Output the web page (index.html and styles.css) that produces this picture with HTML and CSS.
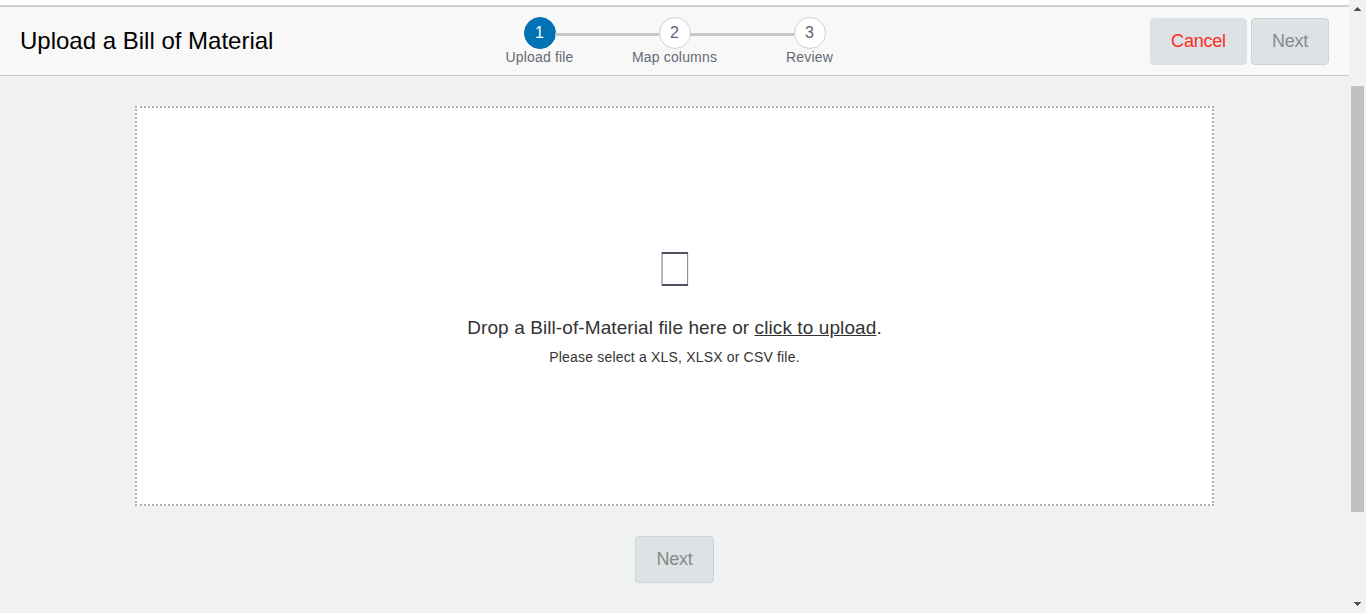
FILE: index.html
```html
<!DOCTYPE html>
<html lang="en">
<head>
<meta charset="utf-8">
<title>Upload a Bill of Material</title>
<link rel="stylesheet" href="styles.css">
</head>
<body>
<div class="viewport">
  <div class="page">
    <header class="header">
      <h1 class="title">Upload a Bill of Material</h1>
      <ol class="steps">
        <li class="step active"><span class="circle">1</span><span class="label">Upload file</span></li>
        <li class="step"><span class="circle">2</span><span class="label">Map columns</span></li>
        <li class="step"><span class="circle">3</span><span class="label">Review</span></li>
      </ol>
      <div class="actions">
        <button class="btn cancel">Cancel</button>
        <button class="btn next">Next</button>
      </div>
    </header>
    <main class="content">
      <section class="dropzone">
        <svg class="glyph" width="28" height="34" viewBox="0 0 28 34" shape-rendering="crispEdges">
          <path fill="#c0c1c8" d="M0 0h1v34H0z"/>
          <path fill="#b2b3bb" d="M1 2h1v30H1z"/>
          <path fill="#8f909b" d="M26 2h1v30h-1z"/>
          <path fill="#f0f0f2" d="M27 0h1v34h-1z"/>
          <path fill="#4f5060" d="M1 0h26v2H1zM1 32h26v2H1z"/>
        </svg>
        <p class="prompt">Drop a Bill-of-Material file here or <a class="link">click to upload</a>.</p>
        <p class="hint">Please select a XLS, XLSX or CSV file.</p>
      </section>
      <button class="btn next bottom">Next</button>
    </main>
  </div>
  <div class="scrollbar">
    <svg class="arrow" width="7" height="4" viewBox="0 0 7 4" shape-rendering="crispEdges"><path fill="#505050" d="M3 0h1v1h1v1h1v1h1v1H0V3h1V2h1V1h1z"/></svg>
    <div class="thumb"></div>
    <svg class="arrow down" width="7" height="4" viewBox="0 0 7 4" shape-rendering="crispEdges"><path fill="#505050" d="M0 0h7v1H6v1H5v1H4v1H3V3H2V2H1V1H0z"/></svg>
  </div>
</div>
</body>
</html>
```
FILE: styles.css
```css
* { box-sizing: border-box; }
body {
  margin: 0;
  overflow: hidden;
  font-family: "Liberation Sans", Arial, sans-serif;
  background: #f0f1f3;
}
.viewport { display: flex; height: 613px; }
.page { flex: 1; border-top: 5px solid #fff; }
.header {
  display: grid;
  grid-template-columns: 1fr 405px 1fr;
  height: 71px;
  padding: 0 20px;
  background: #f8f8f8;
  border-top: 2px solid #d0d0d0;
  border-bottom: 1px solid #c8c9cd;
}
.title {
  margin: 0;
  padding-top: 20px;
  font-size: 24px;
  line-height: 28px;
  font-weight: 400;
  color: #000;
}
.steps {
  display: flex;
  margin: 0;
  padding: 10px 0 0;
  list-style: none;
}
.step {
  position: relative;
  width: 135px;
  display: flex;
  flex-direction: column;
  align-items: center;
}
.step + .step::before {
  content: "";
  position: absolute;
  top: 16px;
  left: -52px;
  width: 104px;
  height: 3px;
  background: #c3c8c8;
}
.circle {
  width: 32px;
  height: 32px;
  border: 1px solid #d0d0d0;
  border-radius: 50%;
  background: #fff;
  color: #5c6370;
  font-size: 16px;
  line-height: 30px;
  text-align: center;
}
.active .circle { background: #0072b4; border-color: #0072b4; color: #fff; }
.label { font-size: 14px; line-height: 16px; letter-spacing: .18px; color: #666a76; }
.actions { display: flex; justify-content: flex-end; gap: 4px; padding-top: 11px; }
.btn {
  height: 47px;
  padding: 0;
  border: 1px solid #dde2e4;
  border-radius: 4px;
  background: #dde2e4;
  font: 18px "Liberation Sans", Arial, sans-serif;
  letter-spacing: -.2px;
}
.cancel { width: 97px; color: #ff2a20; }
.next { width: 78px; border-color: #cfd1d2; color: #858989; }
.content {
  display: flex;
  flex-direction: column;
  align-items: center;
  padding-top: 30px;
}
.dropzone {
  display: flex;
  flex-direction: column;
  align-items: center;
  width: 1079px;
  height: 400px;
  padding-top: 144px;
  border: 2px dotted #b0b0b0;
  background: #fff;
  color: #333;
}
.prompt { margin: 30px 0 0; font-size: 19px; line-height: 24px; letter-spacing: .09px; }
.link { text-decoration: underline; }
.hint { margin: 8px 0 0; font-size: 14px; line-height: 18px; letter-spacing: .18px; }
.bottom { width: 79px; margin-top: 30px; }
.scrollbar {
  display: flex;
  flex-direction: column;
  align-items: center;
  width: 17px;
  padding: 7px 0;
  background: #f1f1f1;
}
.thumb { width: 13px; height: 426px; margin-top: 75px; background: #c1c1c1; }
.down { margin-top: auto; }
```
